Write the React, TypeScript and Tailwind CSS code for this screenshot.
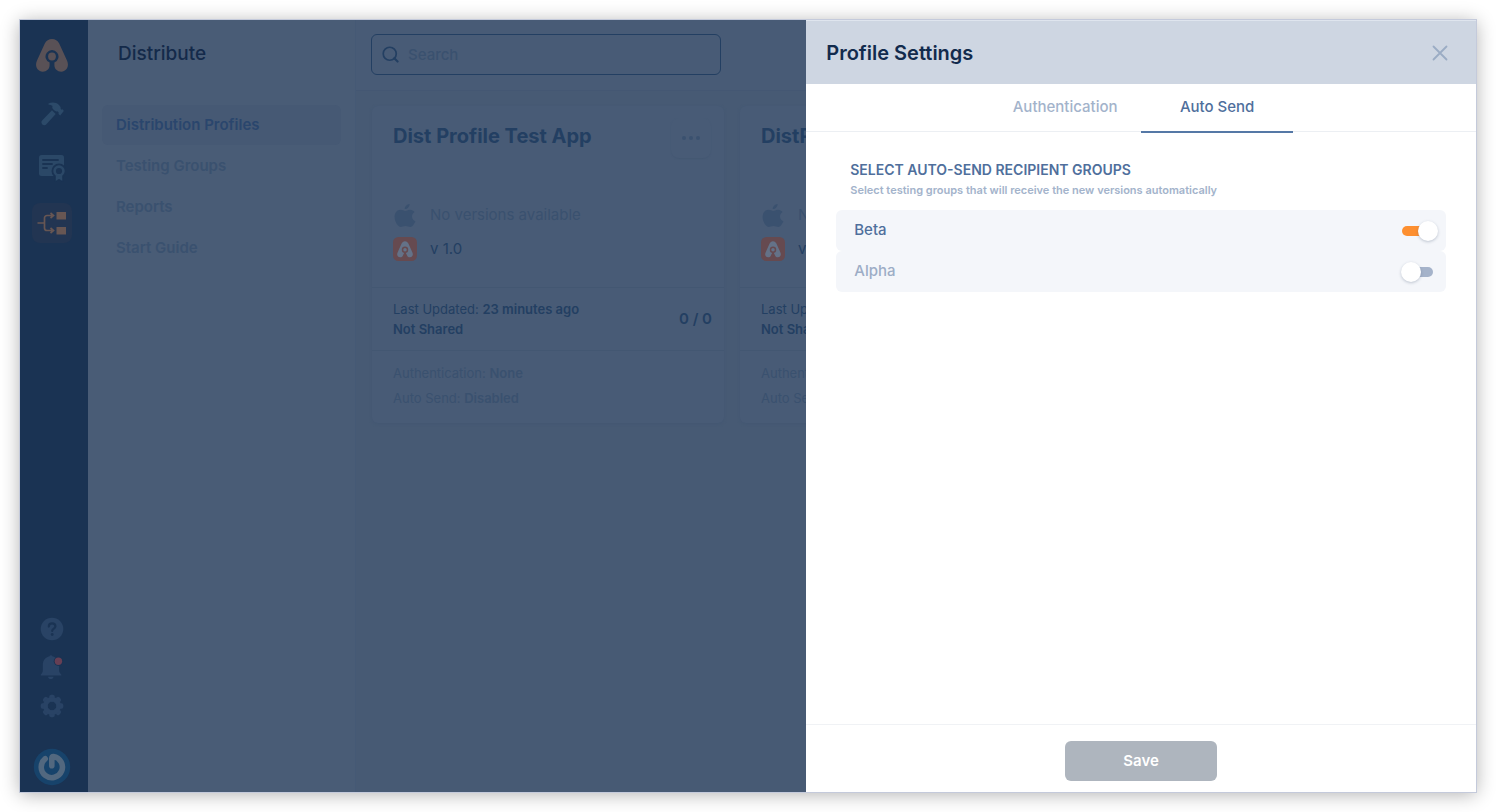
import { useState } from "react";

function BrandLogo() {
  return (
    <svg viewBox="0 0 32 33" className="h-[33px] w-8" aria-hidden="true">
      <path
        fill="#595156"
        fillRule="evenodd"
        d="M16 0c3.200 0 5.700 1.600 7.200 4.600l7.900 17.200c2.400 5.400-.6 10.900-5.800 10.900-4 0-6.900-2.700-6.900-6.400v-2.700a6.500 6.500 0 1 0-4.800 0v2.700c0 3.700-2.900 6.400-6.900 6.400-5.200 0-8.200-5.500-5.800-10.900L8.800 4.600C10.300 1.600 12.800 0 16 0Z"
      />
      <circle cx="16" cy="17.500" r="3.900" fill="#595156" />
    </svg>
  );
}

function HammerIcon() {
  return (
    <svg viewBox="0 0 24 24" className="size-6" fill="#2c4a69" aria-hidden="true">
      <path d="M8.500 1.600C12-.1 16.200.3 19 3l1.200 1.500c.5.700.6 1.500.4 2.300l1 1 1.200-.5 1 1.700-3.600 4.400-1.700-1.500.2-1.500-1.300-1.200c-1 .4-2.100.2-2.900-.6l-1.600-1.600c-.8-.9-.8-2-.3-2.900C11.300 3.300 10 2.700 8.400 2.500Z" />
      <path d="m12 8.200 3.700 3.700-9.300 10.300c-1.100 1.200-2.900 1.300-4.100.2-1.200-1.200-1.200-3 0-4.100Z" />
    </svg>
  );
}

function CertificateIcon() {
  return (
    <svg viewBox="0 0 28 28" className="size-7" aria-hidden="true">
      <rect x="1" y="1" width="25" height="21" rx="2.500" fill="#2b4867" />
      <path d="M5 6h15M5 10h9M5 14h4" stroke="#1a3353" strokeWidth="1.800" strokeLinecap="round" />
      <circle cx="21" cy="17" r="7.500" fill="#1a3353" />
      <path d="m17.500 20-.1 7.500 3.600-2.300 3.600 2.300-.1-7.500Z" fill="#2b4867" stroke="#1a3353" strokeWidth=".6" />
      <circle cx="21" cy="17" r="4.400" fill="#1a3353" stroke="#2b4867" strokeWidth="2.600" />
    </svg>
  );
}

function DistributeIcon() {
  return (
    <svg viewBox="0 0 30 24" className="h-6 w-[30px]" fill="none" aria-hidden="true">
      <path
        d="M.5 12H7M15 4.500h-5A2.500 2.500 0 0 0 7.500 7v10a2.500 2.500 0 0 0 2.500 2.500h5M13.500 2l3 2.500-3 2.500M13.500 17l3 2.500-3 2.500"
        stroke="#675653"
        strokeWidth="1.700"
      />
      <path d="M19.500 1h9.500v7.500h-9.500zM19.500 16h9.500v7.500h-9.500z" fill="#675653" />
    </svg>
  );
}

function HelpIcon() {
  return (
    <svg viewBox="0 0 24 24" className="size-6" aria-hidden="true">
      <circle cx="12" cy="12" r="11.300" fill="#294365" />
      <path
        d="M8.800 9.600c0-1.900 1.400-3.200 3.300-3.200s3.300 1.200 3.300 2.900c0 2.300-3.200 2.300-3.200 4.700"
        fill="none"
        stroke="#1a3353"
        strokeWidth="2.200"
        strokeLinecap="round"
      />
      <circle cx="12.200" cy="17.500" r="1.400" fill="#1a3353" />
    </svg>
  );
}

function BellIcon() {
  return (
    <svg viewBox="0 0 24 26" className="h-[26px] w-6" aria-hidden="true">
      <path
        fill="#294365"
        d="M9.500 2.300a1.500 1.500 0 0 1 2.900-.1c4.300 1 6.700 4.200 6.700 8.600v5.400c0 2.200 1.200 3.400 2.200 4.200v1.100H.8v-1.100c1-.8 2-2 2-4.200v-5.400c0-4.400 2.500-7.500 6.700-8.500ZM8 22.800h5.600c-.3 1.500-1.300 2.300-2.800 2.300S8.300 24.300 8 22.800Z"
      />
      <circle cx="18.400" cy="7.200" r="4.700" fill="#1a3353" />
      <circle cx="18.400" cy="7.200" r="3.700" fill="#673f54" />
    </svg>
  );
}

const gearTeeth = [0, 45, 90, 135, 180, 225, 270, 315];

function GearIcon() {
  return (
    <svg viewBox="0 0 24 24" className="size-6" aria-hidden="true">
      <g fill="#294365">
        {gearTeeth.map((a) => (
          <rect key={a} x="9.300" y=".7" width="5.400" height="7" rx="1.800" transform={`rotate(${a} 12 12)`} />
        ))}
      </g>
      <circle cx="12" cy="12" r="6.700" fill="none" stroke="#294365" strokeWidth="4.600" />
    </svg>
  );
}

function AvatarIcon() {
  return (
    <svg viewBox="0 0 38 38" className="size-[38px]" fill="none" aria-hidden="true">
      <circle cx="19" cy="19" r="18.200" fill="#17436b" />
      <path
        d="M12.200 10.800a10.600 10.600 0 1 0 8.200-2.200c-1.200 0-1.600.5-1.600 1.600v7.500"
        stroke="#52687f"
        strokeWidth="5.600"
        strokeLinecap="round"
        strokeLinejoin="round"
      />
    </svg>
  );
}

function SearchIcon() {
  return (
    <svg viewBox="0 0 18 18" className="size-[17px]" fill="none" stroke="#233f62" strokeWidth="1.800" aria-hidden="true">
      <circle cx="8.200" cy="8.200" r="6.900" />
      <path d="m13 13 3.500 3.500" strokeWidth="2.200" strokeLinecap="round" />
    </svg>
  );
}

function AppleIcon() {
  return (
    <svg viewBox="0 0 22 25" className="h-[25px] w-[22px]" fill="#3a516f" aria-hidden="true">
      <path d="M15.600 1c.1 2.700-2.100 5-4.900 5.100C10.500 3.600 13 1.100 15.600 1Z" />
      <path d="M11.200 8c1.200 0 2.600-1.300 4.800-1.300 1.900 0 3.600.9 4.600 2.400-3.900 2.300-3.200 7.700.8 9.200-.9 2.300-2.900 5.700-5.200 5.700-1.700 0-2.400-1-4.700-1s-3 1-4.600 1C3.900 24 .6 18.600.6 14.100c0-4.500 2.700-7.300 5.900-7.300 2.100 0 3.500 1.200 4.700 1.200Z" />
    </svg>
  );
}

function AppIcon() {
  return (
    <svg viewBox="0 0 24 24" className="size-6" aria-hidden="true">
      <rect width="24" height="24" rx="5.500" fill="#664a50" />
      <path
        d="M12 4.200c1.700 0 2.700.9 3.400 2.400l4 8.900c1.200 2.700-.3 4.800-2.500 4.800-1.700 0-2.600-1-3-2.400l-1.200-2.100h-1.400l-1.200 2.100c-.4 1.400-1.300 2.400-3 2.400-2.200 0-3.700-2.100-2.500-4.800l4-8.900C9.300 5.100 10.300 4.200 12 4.200Z"
        fill="#647288"
      />
      <circle cx="12" cy="12.800" r="2.500" fill="#647288" stroke="#664a50" strokeWidth="1.500" />
      <path d="M12 15.500v5" stroke="#664a50" strokeWidth="1.600" />
    </svg>
  );
}

const navItems = ["Distribution Profiles", "Testing Groups", "Reports", "Start Guide"];

function Rail() {
  return (
    <nav aria-label="Modules" className="flex w-[68px] shrink-0 flex-col items-center justify-between bg-[#1a3353] pr-1 pt-[19px] pb-[6px]">
      <div className="flex flex-col items-center">
        <a href="#home" aria-label="Home"><BrandLogo /></a>
        <a href="#build" aria-label="Build" className="mt-[30px]"><HammerIcon /></a>
        <a href="#signing" aria-label="Signing Identities" className="mt-7"><CertificateIcon /></a>
        <a href="#distribute" aria-label="Distribute" className="mt-[21px] flex size-10 items-center justify-center rounded-lg bg-[#223552]">
          <DistributeIcon />
        </a>
      </div>
      <div className="flex flex-col items-center">
        <button aria-label="Help"><HelpIcon /></button>
        <button aria-label="Notifications" className="mt-[13px]"><BellIcon /></button>
        <button aria-label="Settings" className="mt-[14px]"><GearIcon /></button>
        <button aria-label="Account" className="mt-[30px]"><AvatarIcon /></button>
      </div>
    </nav>
  );
}

function Sidebar() {
  return (
    <aside className="w-[268px] shrink-0 border-r border-[#455975] px-[14px]">
      <h1 className="px-4 pt-[21px] text-[19px] leading-[26px] font-medium text-[#142a4a]">Distribute</h1>
      <ul className="mt-[38px]">
        {navItems.map((item, i) => (
          <li key={item}>
            <a
              href="#nav"
              className={
                "mb-px flex h-10 items-center rounded-md px-[14px] text-[15px] font-semibold " +
                (i === 0 ? "bg-[#465974] text-[#2a466d]" : "text-[#3a516f]")
              }
            >
              {item}
            </a>
          </li>
        ))}
      </ul>
    </aside>
  );
}

function ProfileCard({ title }: { title: string }) {
  return (
    <article className="w-[352px] shrink-0 rounded-md bg-[#485b76] shadow-[0_1px_3px_#435772]">
      <div className="h-[181px] px-[21px]">
        <div className="flex items-start justify-between pt-3">
          <h2 className="pt-1 text-[20px] leading-7 font-bold whitespace-nowrap text-[#233f62]">{title}</h2>
          <button aria-label="More actions" className="-mr-2 flex size-10 items-center justify-center gap-[3px] rounded-lg shadow-[0_1px_1px_#445873]">
            <span className="size-1 rounded-full bg-[#3a516f]" />
            <span className="size-1 rounded-full bg-[#3a516f]" />
            <span className="size-1 rounded-full bg-[#3a516f]" />
          </button>
        </div>
        <div className="mt-[42px] flex h-[30px] items-center gap-[13px] text-[15px] text-[#3a516f]">
          <span className="flex w-6 justify-center"><AppleIcon /></span>
          No versions available
        </div>
        <div className="mt-1 flex h-[30px] items-center gap-[13px] text-[15px] text-[#233f62]">
          <AppIcon />
          v 1.0
        </div>
      </div>
      <div className="flex h-[63px] items-center justify-between border-t border-[#435772] pr-3 pl-[21px] text-[#233f62]">
        <div className="text-[13px] leading-5">
          <p>Last Updated: <strong className="font-semibold">23 minutes ago</strong></p>
          <p className="font-semibold">Not Shared</p>
        </div>
        <span className="text-[15px] font-semibold">0 / 0</span>
      </div>
      <div className="border-t border-[#435772] px-[21px] pt-[10px] pb-3 text-[13px] leading-[25px] text-[#3a516f]">
        <p>Authentication: <strong className="font-semibold">None</strong></p>
        <p>Auto Send: <strong className="font-semibold">Disabled</strong></p>
      </div>
    </article>
  );
}

function Profiles() {
  return (
    <main className="min-w-0 flex-1 overflow-hidden bg-[#475a74]">
      <div className="h-[71px] border-b border-[#445773] bg-[#485b76] pt-[14px] pl-[15px]">
        <div className="flex h-[41px] w-[350px] items-center gap-[9px] rounded-md border border-[#233f62] px-[10px]">
          <SearchIcon />
          <input
            type="search"
            aria-label="Search profiles"
            placeholder="Search"
            className="h-full min-w-0 flex-1 bg-transparent text-[15px] font-medium text-[#233f62] outline-none placeholder:text-[#3a516f]"
          />
        </div>
      </div>
      <div className="flex gap-4 pt-[15px] pl-4">
        <ProfileCard title="Dist Profile Test App" />
        <ProfileCard title="DistProfile" />
      </div>
    </main>
  );
}

function GroupRow({ name, initial }: { name: string; initial: boolean }) {
  const [on, setOn] = useState(initial);
  return (
    <label
      className={
        "flex h-[41px] items-center justify-between rounded-md bg-[#f4f6fa] pr-2 pl-[18px] text-[15px] font-medium " +
        (on ? "text-[#4f6f9c]" : "text-[#9dadc6]")
      }
    >
      {name}
      <input
        type="checkbox"
        role="switch"
        checked={on}
        onChange={(e) => setOn(e.target.checked)}
        className="relative h-5 w-[37px] appearance-none before:absolute before:top-[5px] before:left-1 before:h-[10px] before:w-7 before:rounded-full before:bg-[#a5b3ca] after:absolute after:top-0 after:left-0 after:size-5 after:rounded-full after:bg-white after:shadow-[0_1px_3px_rgba(60,80,110,0.3)] checked:before:left-px checked:before:bg-[#fd8f30] checked:after:left-[17px]"
      />
    </label>
  );
}

function SettingsDrawer() {
  return (
    <section aria-label="Profile Settings" className="flex w-[46%] shrink-0 flex-col bg-white">
      <header className="flex h-16 items-center justify-between border-t border-[#dfe5ee] bg-[#ced6e2] px-5">
        <h2 className="text-[20px] font-semibold text-[#122b4d]">Profile Settings</h2>
        <button aria-label="Close" className="mr-2">
          <svg viewBox="0 0 16 16" className="size-4" stroke="#9bacc4" strokeWidth="1.800" strokeLinecap="round" aria-hidden="true">
            <path d="m1.500 1.500 13 13M14.500 1.500l-13 13" />
          </svg>
        </button>
      </header>
      <div role="tablist" className="flex h-12 justify-center border-b border-[#eceff3] text-[15px] font-medium">
        <button role="tab" aria-selected="false" className="h-[49px] w-38 pb-[3px] text-[#a3b3cb]">Authentication</button>
        <button role="tab" aria-selected="true" className="h-[49px] w-38 border-b-2 border-[#5578a6] pb-px text-[#4f6f9c]">Auto Send</button>
      </div>
      <div className="flex-1 px-[30px] pt-7">
        <h3 className="px-[14px] text-[14px] leading-5 font-semibold text-[#4f6f9c]">SELECT AUTO-SEND RECIPIENT GROUPS</h3>
        <p className="px-[14px] text-[11px] leading-5 font-semibold text-[#a3b3cb]">
          Select testing groups that will receive the new versions automatically
        </p>
        <div className="mt-[10px]">
          <GroupRow name="Beta" initial={true} />
          <GroupRow name="Alpha" initial={false} />
        </div>
      </div>
      <footer className="flex h-[68px] justify-center border-t border-[#f0f2f5] pt-4">
        <button className="h-10 w-[152px] rounded-md bg-[#aeb5be] text-[15px] font-semibold text-white">Save</button>
      </footer>
    </section>
  );
}

export default function App() {
  return (
    <div className="flex min-h-screen bg-white p-5 font-['Inter','Liberation_Sans',sans-serif]">
      <div className="flex min-w-0 flex-1 bg-[#495c76] shadow-[0_0_0_1px_#c4cadb,0_2px_18px_rgba(0,0,0,0.32)]">
        <Rail />
        <Sidebar />
        <Profiles />
        <SettingsDrawer />
      </div>
    </div>
  );
}
